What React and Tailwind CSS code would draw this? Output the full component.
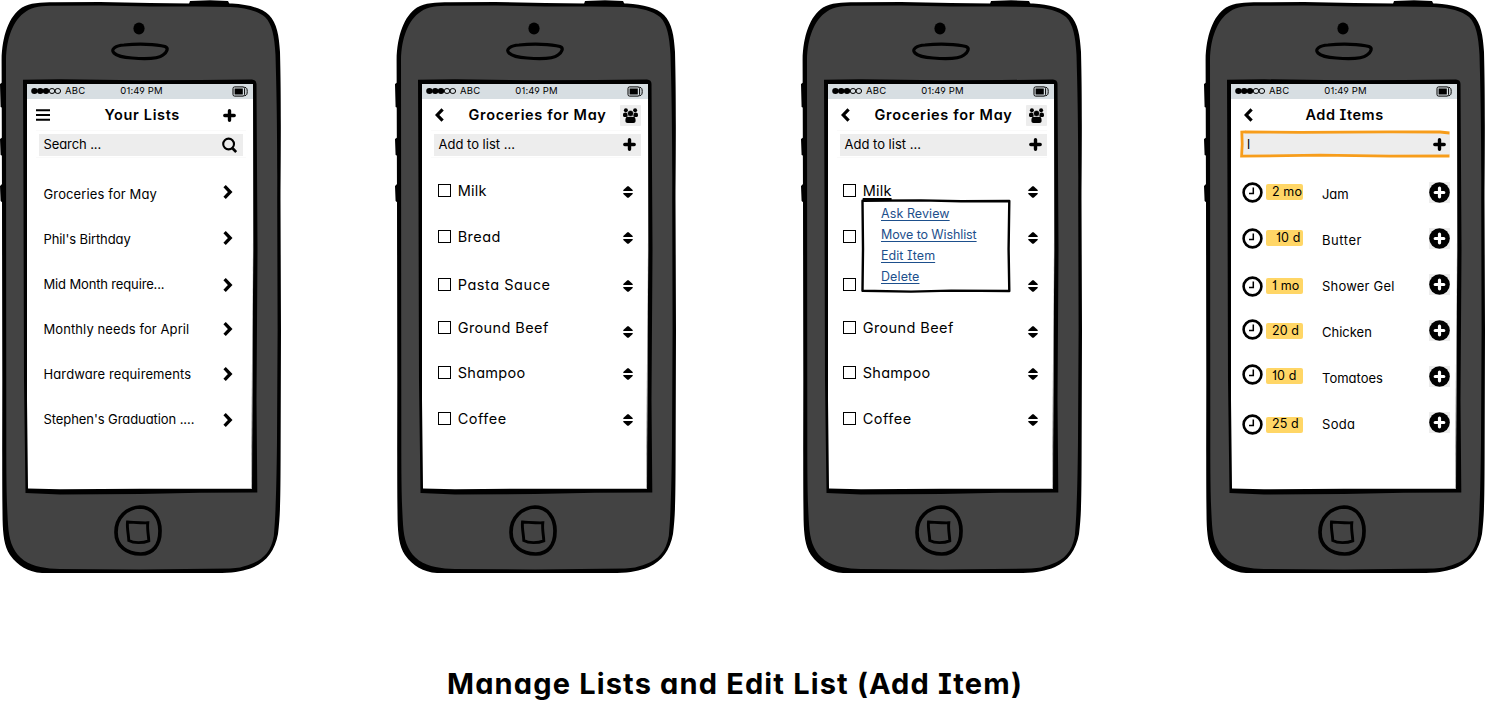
import React from "react";

const lists = [
  { name: "Groceries for May", text: "mt-[4.4px] tracking-[0.13px]", icon: "-mt-[0.6px]" },
  { name: "Phil's Birthday", text: "mt-[2.4px] -tracking-[0.1px]", icon: "-mt-[0.6px]" },
  { name: "Mid Month require...", text: "mt-[1px] -tracking-[0.15px]", icon: "mt-[2.6px]" },
  { name: "Monthly needs for April", text: "-mt-[1px] tracking-[0.09px]", icon: "-mt-[2.6px]" },
  { name: "Hardware requirements", text: "-mt-[4px] tracking-[0.11px]", icon: "-mt-[4.6px]" },
  { name: "Stephen's Graduation ....", text: "-mt-[6px] -tracking-[0.08px]", icon: "-mt-[4.6px]" },
];

const groceries = [
  { name: "Milk", box: "-mt-[2.2px]", text: "-mt-[2.2px] tracking-[0.2px]", icon: "mt-0" },
  { name: "Bread", box: "-mt-[3px]", text: "-mt-[1.6px] tracking-[0.45px]", icon: "mt-0" },
  { name: "Pasta Sauce", box: "mt-[1px]", text: "mt-[2.4px] tracking-[0.55px]", icon: "mt-[4.4px]" },
  { name: "Ground Beef", box: "-mt-[5px]", text: "-mt-[3.6px] tracking-[0.4px]", icon: "mt-[4px]" },
  { name: "Shampoo", box: "-mt-[7px]", text: "-mt-[6.4px] tracking-[0.3px]", icon: "-mt-[3.6px]" },
  { name: "Coffee", box: "-mt-[7px]", text: "-mt-[5.6px] tracking-[0.5px]", icon: "-mt-[3.6px]" },
];

const suggestions = [
  { age: "2 mo", name: "Jam", clock: "mt-0", chip: "mt-0 pl-[6px]", text: "-tracking-[0.1px]" },
  { age: "10 d", name: "Butter", clock: "mt-[0.6px]", chip: "mt-0 pl-[10px]", text: "tracking-[0.55px]" },
  { age: "1 mo", name: "Shower Gel", clock: "mt-[4px]", chip: "mt-[4px] pl-[6px]", text: "tracking-[0.2px]" },
  { age: "20 d", name: "Chicken", clock: "-mt-[1.4px]", chip: "mt-[2px] pl-[6px]", text: "tracking-normal" },
  { age: "10 d", name: "Tomatoes", clock: "-mt-[3.4px]", chip: "mt-0 pl-[6px]", text: "tracking-normal" },
  { age: "25 d", name: "Soda", clock: "mt-[4.6px]", chip: "mt-[6px] pl-[6px] pb-[2px]", text: "tracking-[0.3px]" },
];

const menuLinks = [
  { label: "Ask Review", tracking: "tracking-[0.08px]" },
  { label: "Move to Wishlist", tracking: "-tracking-[0.1px]" },
  { label: "Edit Item", tracking: "tracking-[0.05px]" },
  { label: "Delete", tracking: "tracking-[0.1px]" },
];

/* ---------- icons ---------- */

function PlusIcon() {
  return (
    <svg className="block h-[13px] w-[13px] shrink-0" viewBox="0 0 13 13">
      <path d="M6.5 1.8V11.2M1.8 6.5H11.2" fill="none" stroke="#000" strokeWidth="3.4" strokeLinecap="round" />
    </svg>
  );
}

function HamburgerIcon() {
  return (
    <svg className="-mt-[1px] block h-3 w-[14px] shrink-0" viewBox="0 0 14 12">
      <path d="M0 1.2H14M0 6H14M0 10.8H14" stroke="#000" strokeWidth="2.1" />
    </svg>
  );
}

function ChevronLeft() {
  return (
    <svg className="-mt-[1px] block h-[14px] w-[9px] shrink-0" viewBox="0 0 9 14">
      <path d="M7.6 1.3L2.2 7L7.6 12.7" fill="none" stroke="#000" strokeWidth="3.2" />
    </svg>
  );
}

function ChevronRight({ className }) {
  return (
    <svg className={`block h-[14px] w-[10px] shrink-0 ${className}`} viewBox="0 0 10 14">
      <path d="M1.6 1.2L7.2 7L1.6 12.8" fill="none" stroke="#000" strokeWidth="3.3" />
    </svg>
  );
}

function SearchIcon() {
  return (
    <svg className="mt-[1px] block h-[16px] w-[15px] shrink-0" viewBox="0 0 15 16">
      <circle cx="6.6" cy="7" r="5.4" fill="none" stroke="#000" strokeWidth="2.1" />
      <path d="M10.5 11.2L14.2 15" stroke="#000" strokeWidth="2.7" />
    </svg>
  );
}

function PeopleIcon() {
  return (
    <span className="flex h-[21px] w-[21px] shrink-0 items-center justify-center rounded-[1px] bg-[#ededed]">
      <svg className="block h-[15px] w-[15px]" viewBox="0 0 15 15">
        <circle cx="2.9" cy="2.2" r="2" />
        <circle cx="12.1" cy="2.2" r="2" />
        <path d="M0 7.2C0 5.2 1 4.6 2.6 4.6C4.2 4.6 4.2 6 4.8 7.6L3.6 9H1.2C.4 8.8 0 8.2 0 7.2Z" />
        <path d="M15 7.2C15 5.2 14 4.6 12.4 4.6C10.8 4.6 10.8 6 10.2 7.6L11.4 9H13.8C14.6 8.8 15 8.2 15 7.2Z" />
        <circle cx="7.5" cy="5.4" r="3" stroke="#ededed" strokeWidth=".4" />
        <path d="M4.6 8.4C5.6 9.2 9.4 9.2 10.4 8.4C12 8.600 12.600 10.400 12.600 12.400C12.600 14.200 11.800 14.900 10.400 14.900H4.600C3.200 14.900 2.400 14.200 2.400 12.400C2.400 10.400 3 8.600 4.600 8.400Z" />
      </svg>
    </span>
  );
}

function SortIcon({ className }) {
  return (
    <svg className={`block h-[12px] w-[10px] shrink-0 ${className}`} viewBox="0 0 10 12">
      <path d="M4.400 .2H5.600L9.700 4V5H.3V4Z" />
      <path d="M.3 7H9.700V8L5.600 11.800H4.400L.3 8Z" />
    </svg>
  );
}

function ClockIcon({ className }) {
  return (
    <svg className={`block h-[21px] w-[21px] shrink-0 ${className}`} viewBox="0 0 21 21">
      <circle cx="10.5" cy="10.5" r="8.9" fill="none" stroke="#000" strokeWidth="2.6" />
      <path d="M11.300 5.600V11.400H7" fill="none" stroke="#000" strokeWidth="1.500" />
    </svg>
  );
}

function AddCircleIcon() {
  return (
    <svg className="mt-[1px] block h-[21px] w-[21px] shrink-0 bg-[#ededed]" viewBox="0 0 21 21">
      <circle cx="10.5" cy="10.5" r="10.3" />
      <path d="M10.500 6.200V14.800M6.200 10.500H14.800" fill="none" stroke="#fff" strokeWidth="3.200" strokeLinecap="round" />
    </svg>
  );
}

function SignalDots() {
  return (
    <svg className="block h-[8px] w-[31px] shrink-0" viewBox="0 0 31 8">
      <ellipse cx="3.400" cy="4" rx="3.200" ry="2.900" />
      <ellipse cx="9.200" cy="4" rx="3.200" ry="2.900" />
      <ellipse cx="15" cy="4" rx="3.200" ry="2.900" />
      <ellipse cx="21" cy="4" rx="2.800" ry="2.500" fill="none" stroke="#000" />
      <ellipse cx="26.800" cy="4" rx="2.800" ry="2.500" fill="none" stroke="#000" />
    </svg>
  );
}

function BatteryIcon() {
  return (
    <svg className="block h-[11px] w-[16px] shrink-0" viewBox="0 0 16 11">
      <rect x="1" y=".9" width="11.600" height="9.200" rx="1.600" fill="none" stroke="#000" strokeWidth="1" />
      <path d="M12.600 1.200C14.800 1.600 15.200 3 15.200 5.500S14.800 9.400 12.600 9.800" fill="none" stroke="#000" strokeWidth="1" />
      <rect x="2.600" y="2.500" width="8.200" height="6" />
    </svg>
  );
}

/* ---------- phone ---------- */

function PhoneBody() {
  return (
    <svg className="col-start-1 row-start-1 block h-[575px] w-[282px]" viewBox="0 0 282 575">
      <path d="M189 4L190 1L210 .3L228 1L230 5Z" />
      <path d="M0 84L3 82V108L.6 107ZM0 139L3 137V156L.6 155ZM0 186L3 183V203L.6 201Z" />
      <path d="M1.6 60C2 36 9 16 22 7.500C30 2.800 40 2.400 55 2.200L100 2L150 3L190 3.400L232 3.600C248 4.500 262 8 269 15C277 23 279 36 280 52C281 90 281 130 280.500 200L281 330L280.600 460C280.400 500 280.300 516 278 534C275 550 267 561 254 567C244 571 236 572.500 222 573L140 573L42 573C28 572 18 566 10 555C4 546 3 534 2.600 520C2 480 2.300 440 2.300 380L2 200Z" />
      <path fill="#434343" d="M6 60C6.500 38 13 20 26 11.500C33 6.600 42 6 55 5.800L100 5.600L150 6.400L195 6.600L230 7C246 7.800 258 11 265 17C272 24 274.500 36 275.500 55C276.500 90 277.500 130 277.200 200L277.600 330L277 440C276.500 490 275.600 516 273.800 536C271 552 263 559.500 251 564C242 567.500 238 568 230 568.600L140 569.400L60 569C46 568.500 34 567 24 560.500C14 553 10 543 8.500 530C6.300 505 6.300 470 6.300 430L6.200 330Z" />
      <path d="M23 79.800L60 79.300L140 80.200L200 80L252 79.600Q256.500 80 256.500 84L257.500 250L256.500 400L257.300 492.500L200 492.800L140 494L60 494.500L25.500 493L24 380L23.500 200Z" />
      <path fill="#fff" d="M27 84L140 84L253 84L253.300 250L252.300 400L252 488.700H140L60 489.200L28 488.500L27 400Z" />
      <path fill="#8a8a8a" d="M253 240L252.600 380L251.600 488.500L251 488.500L252 360Z" />
      <ellipse cx="139" cy="28.600" rx="5.600" ry="6" />
      <path fill="none" stroke="#000" strokeWidth="3.200" d="M114 53C110 49 116 45.500 124 45C138 43.600 156 44 165 46.500C169 48 167 52 163 55C158 59 142 58.800 132 58C124 57.600 117 56 114 53Z" />
      <path fill="none" stroke="#000" strokeWidth="3.700" d="M140 507C153 507.200 160.200 518.200 160 531.200C160 545.200 153 553.700 141 554C127 554.200 116 546.200 116 532.200C116 517.200 127 507.700 140 507Z" />
      <path fill="none" stroke="#000" strokeWidth="2.900" d="M127.500 522C134 522.300 142 523.100 147.800 522.800C147 529.300 148.600 535.300 148.800 540.800C143 543.100 134 543.500 128.800 540.600C128.600 534.300 126.800 528.300 127.500 522Z" />
    </svg>
  );
}

function StatusBar() {
  return (
    <div className="flex h-[15px] items-center bg-[#d7dee2] pb-[1px] pl-[4px] pr-[5px] text-[9.5px] leading-none">
      <SignalDots />
      <span className="ml-[3px] tracking-[0.2px]">ABC</span>
      <span className="ml-[35px] tracking-[0.15px]">01:49 PM</span>
      <span className="ml-auto">
        <BatteryIcon />
      </span>
    </div>
  );
}

function Header({ className, children }) {
  return (
    <div className={`flex h-[31px] items-center pt-[2px] text-[14.5px] font-semibold leading-none whitespace-nowrap ${className}`}>
      {children}
    </div>
  );
}

function Field({ className, children }) {
  return (
    <div className="ml-[9px] h-[28px] w-[210px] border-y border-[#fafafa] pl-[3px] pt-[3px]">
      <div className={`flex h-[22px] items-center justify-between bg-[#ededed] pb-[2px] pl-[4.5px] text-[13px] leading-none ${className}`}>
        {children}
      </div>
    </div>
  );
}

function ActiveField() {
  return (
    <div className="ml-[9px] grid h-[28px] w-[210px]">
      <svg className="col-start-1 row-start-1 block h-[28px] w-[210px]" viewBox="0 0 210 28">
        <path fill="#ededed" d="M3 3H210V25H3Z" />
        <path fill="none" stroke="#f79d1b" strokeWidth="2.800" d="M209.500 3L200 2L150 1.800L60 2.400L5.500 2" />
        <path fill="none" stroke="#f79d1b" strokeWidth="2.800" d="M6 1.800L1.800 2L2.200 14L1.600 26.200L80 25.200L150 26.200L209.500 26" />
      </svg>
      <div className="col-start-1 row-start-1 flex items-center justify-between pl-[7px] pr-[4px] text-[13px] leading-none">
        <span>l</span>
        <PlusIcon />
      </div>
    </div>
  );
}

function Phone({ className = "", children }) {
  return (
    <section className={`grid shrink-0 ${className}`}>
      <PhoneBody />
      <div className="z-10 col-start-1 row-start-1 ml-[27px] mt-[84px] h-[405px] w-[226px]">
        <StatusBar />
        {children}
      </div>
    </section>
  );
}

function GroceryHeader() {
  return (
    <>
      <Header className="pl-[12.5px] pr-[7.5px]">
        <ChevronLeft />
        <h2 className="ml-[25px] tracking-[0.68px]">Groceries for May</h2>
        <span className="ml-auto">
          <PeopleIcon />
        </span>
      </Header>
      <Field className="pr-[5px]">
        <span>Add to list ...</span>
        <PlusIcon />
      </Field>
    </>
  );
}

function GroceryRows({ className, marked, covered = [] }) {
  return (
    <ul className={`mt-[11px] ${className}`}>
      {groceries.map((item) => (
        <li key={item.name} className="flex h-[46px] items-center text-[14.5px] leading-none">
          <span className={`h-[13px] w-[13px] shrink-0 border border-black bg-white ${item.box}`} />
          {!covered.includes(item.name) && (
            <span className={`ml-[6.700px] ${item.text} ${marked === item.name ? "underline decoration-[1.5px] underline-offset-[2px]" : ""}`}>
              {item.name}
            </span>
          )}
          <span className="ml-auto">
            <SortIcon className={item.icon} />
          </span>
        </li>
      ))}
    </ul>
  );
}

function ContextMenu() {
  return (
    <div className="absolute left-[33px] top-[30px] grid h-[94px] w-[150px]">
      <svg className="col-start-1 row-start-1 block h-[94px] w-[150px]" viewBox="0 0 150 94">
        <path fill="#fff" stroke="#000" strokeWidth="2.400" strokeLinejoin="round" d="M1.500 1.800L60 1.400L100 2.200L148.300 2L147.600 50L148.300 92L90 91.600L50 92.600L1.500 91.800L2 50Z" />
      </svg>
      <nav className="col-start-1 row-start-1 flex flex-col items-start pl-[20px] pt-[4px] text-[12.5px] text-[#1d4f8c]">
        {menuLinks.map((link) => (
          <a
            key={link.label}
            className={`h-[21px] leading-[21px] underline decoration-[1px] underline-offset-[2px] [text-decoration-skip-ink:none] ${link.tracking}`}
          >
            {link.label}
          </a>
        ))}
      </nav>
    </div>
  );
}

export default function App() {
  return (
    <main className="flex h-[705px] w-[1486px] flex-col overflow-hidden bg-white font-['Inter',sans-serif] text-black [font-feature-settings:'cv11','cv08','cv01','cv04']">
      <div className="flex h-[575px]">
        <Phone className="mr-[113px]">
          <Header className="pl-[9px] pr-[17px]">
            <HamburgerIcon />
            <h2 className="ml-[54.5px] tracking-[0.65px]">Your Lists</h2>
            <span className="ml-auto">
              <PlusIcon />
            </span>
          </Header>
          <Field className="mr-[3px] pr-[6px]">
            <span className="-tracking-[0.1px]">Search ...</span>
            <SearchIcon />
          </Field>
          <ul className="mt-[11px] pl-[16.5px] pr-[20px]">
            {lists.map((list) => (
              <li key={list.name} className="flex h-[46px] items-center justify-between text-[13px] leading-none">
                <span className={list.text}>{list.name}</span>
                <ChevronRight className={list.icon} />
              </li>
            ))}
          </ul>
        </Phone>

        <Phone className="mr-[124px]">
          <GroceryHeader />
          <GroceryRows className="pl-[16px] pr-[15px]" />
        </Phone>

        <Phone className="mr-[121px]">
          <GroceryHeader />
          <div className="relative">
            <GroceryRows className="pl-[15px] pr-[16px]" marked="Milk" covered={["Bread", "Pasta Sauce"]} />
            <ContextMenu />
          </div>
        </Phone>

        <Phone>
          <Header className="pl-[12.500px] pr-[7px]">
            <ChevronLeft />
            <h2 className="ml-[53px] tracking-[0.5px]">Add Items</h2>
          </Header>
          <ActiveField />
          <ul className="mt-[11px] pl-[10.500px] pr-[7px]">
            {suggestions.map((item) => (
              <li key={item.name} className="flex h-[46px] items-center leading-none">
                <ClockIcon className={item.clock} />
                <span className={`ml-[3.500px] flex h-4 w-[37px] items-center rounded-[2px] bg-[#ffd666] text-[12.5px] tracking-[0.1px] whitespace-nowrap ${item.chip}`}>
                  {item.age}
                </span>
                <span className={`ml-[19px] mt-[5px] text-[13px] ${item.text}`}>{item.name}</span>
                <span className="ml-auto">
                  <AddCircleIcon />
                </span>
              </li>
            ))}
          </ul>
        </Phone>
      </div>

      <h1 className="ml-[447px] mt-[91px] text-[29px] font-bold leading-[36px] tracking-[1.15px] whitespace-nowrap">
        Manage Lists and Edit List (Add Item)
      </h1>
    </main>
  );
}
